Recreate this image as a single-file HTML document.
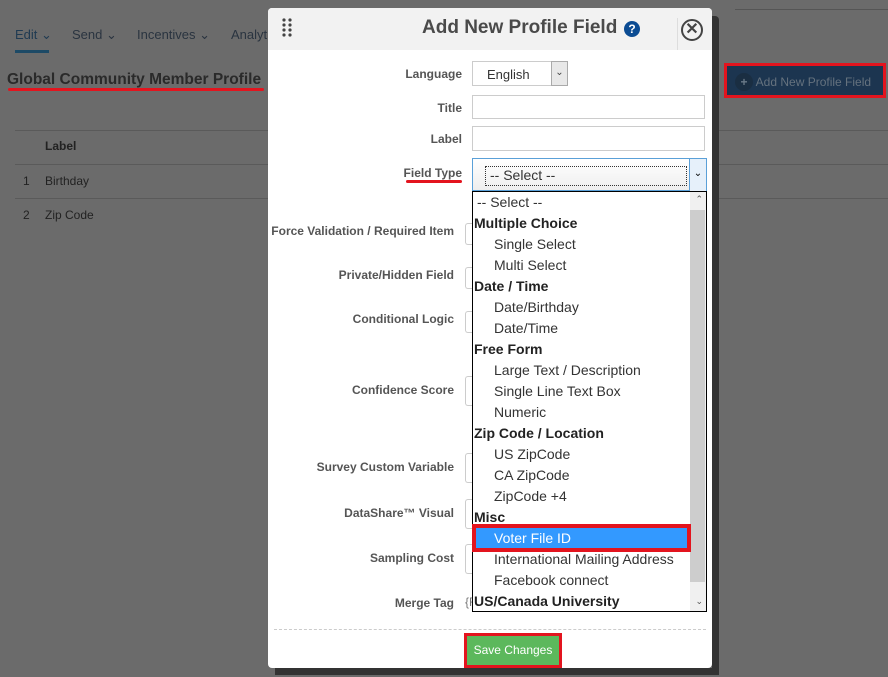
<!DOCTYPE html>
<html><head><meta charset="utf-8"><style>
*{box-sizing:border-box;margin:0;padding:0}
body{width:888px;height:677px;background:#6b6b6b;font-family:"Liberation Sans",sans-serif;position:relative;overflow:hidden}
.a{position:absolute}
.nav{font-size:13px;color:#2a3440;top:27px}
.lbl{position:absolute;right:434px;font-size:12px;font-weight:bold;color:#555;text-align:right;white-space:nowrap}
.lbl.t{right:426px}
.stub{position:absolute;left:465px;width:10px;border:1px solid #ccc;border-right:none;border-radius:3px 0 0 3px}
.it{height:21px;line-height:21px;font-size:14px;color:#333;white-space:nowrap}
.g{font-weight:bold;padding-left:1px;color:#222}
.o{padding-left:21px}
</style></head><body>
<div class="a nav" style="left:15px;color:#1f3a52">Edit ⌄</div>
<div class="a" style="left:15px;top:50px;width:34px;height:3px;background:#1d4a66"></div>
<div class="a nav" style="left:72px">Send ⌄</div>
<div class="a nav" style="left:137px">Incentives ⌄</div>
<div class="a nav" style="left:231px">Analyt</div>
<div class="a" style="left:735px;top:9px;width:153px;height:1px;background:#555"></div>
<div class="a" style="left:7px;top:71px;font-size:15.5px;font-weight:bold;color:#2a2a2a">Global Community Member Profile</div>
<div class="a" style="left:8px;top:88px;width:256px;height:3px;background:#e3141e;border-radius:2px"></div>
<div class="a" style="left:15px;top:130px;width:873px;height:1px;background:#5a5a5a"></div>
<div class="a" style="left:15px;top:164px;width:873px;height:1px;background:#5a5a5a"></div>
<div class="a" style="left:15px;top:198px;width:873px;height:1px;background:#5a5a5a"></div>
<div class="a" style="left:45px;top:139px;font-size:12px;font-weight:bold;color:#222">Label</div>
<div class="a" style="left:23px;top:174px;font-size:12px;color:#222">1</div>
<div class="a" style="left:45px;top:174px;font-size:12px;color:#222">Birthday</div>
<div class="a" style="left:23px;top:208px;font-size:12px;color:#222">2</div>
<div class="a" style="left:45px;top:208px;font-size:12px;color:#222">Zip Code</div>
<div class="a" style="left:724px;top:63px;width:162px;height:35px;border:3px solid #e3141e;background:#1c3550;color:#65727e;font-size:12px;padding:7px 0 0 8px;white-space:nowrap"><span style="display:inline-block;width:18px;height:18px;border-radius:9px;background:#1a2e42;color:#6a7a88;text-align:center;line-height:18px;font-weight:bold">+</span> Add New Profile Field</div>
<div class="a" style="left:712px;top:16px;width:7px;height:658px;background:#333;border-radius:0 4px 4px 0"></div>
<div class="a" style="left:275px;top:668px;width:444px;height:7px;background:#333"></div>
<div class="a" style="left:268px;top:8px;width:444px;height:660px;background:#fff;border-radius:4px">
 <div class="a" style="left:0;top:0;width:444px;height:42px;background:#f2f2f2;border-radius:4px 4px 0 0"></div>
 <div class="a" style="left:14px;top:10px;width:10px;font-size:0">
  <svg width="10" height="20"><g fill="#444"><circle cx="2" cy="2" r="1.6"/><circle cx="8" cy="2" r="1.6"/><circle cx="2" cy="7" r="1.6"/><circle cx="8" cy="7" r="1.6"/><circle cx="2" cy="12" r="1.6"/><circle cx="8" cy="12" r="1.6"/><circle cx="2" cy="17" r="1.6"/><circle cx="8" cy="17" r="1.6"/></g></svg></div>
 <div class="a" style="left:154px;top:9px;font-size:19px;font-weight:bold;color:#4a4a4a">Add New Profile Field</div>
 <div class="a" style="left:356px;top:13px;width:16px;height:16px;border-radius:8px;background:#0c4c93;color:#fff;font-size:12px;font-weight:bold;text-align:center;line-height:16px">?</div>
 <div class="a" style="left:409px;top:10px;width:0;height:32px;border-left:1px solid #ddd"></div>
 <div class="a" style="left:413px;top:11px;width:22px;height:22px;border:2.5px solid #444;border-radius:11px;text-align:center;line-height:17px;font-size:16px;font-weight:bold;color:#444">✕</div>
</div>
<div class="lbl t" style="top:67px">Language</div>
<div class="a" style="left:472px;top:61px;width:96px;height:25px;border:1px solid #ccc;font-size:13px;color:#333;padding:5px 0 0 14px">English</div>
<div class="a" style="left:551px;top:61px;width:17px;height:25px;border:1px solid #aaa;background:#e8e8e8;font-size:10px;text-align:center;line-height:22px;color:#444">⌄</div>
<div class="lbl t" style="top:101px">Title</div>
<div class="a" style="left:472px;top:95px;width:233px;height:24px;border:1px solid #ccc"></div>
<div class="lbl t" style="top:132px">Label</div>
<div class="a" style="left:472px;top:126px;width:233px;height:25px;border:1px solid #ccc"></div>
<div class="lbl t" style="top:166px">Field Type</div>
<div class="a" style="left:406px;top:180px;width:56px;height:3px;background:#e3141e;border-radius:2px"></div>
<div class="a" style="left:472px;top:158px;width:235px;height:33px;border:1px solid #5aa0d8;background:linear-gradient(#fff,#eee)"></div>
<div class="a" style="left:485px;top:166px;width:202px;height:20px;border:1px dotted #333;font-size:14px;color:#333;padding-left:4px;line-height:17px">-- Select --</div>
<div class="a" style="left:689px;top:159px;width:17px;height:32px;border-left:1px solid #5aa0d8;background:#e6f0fa;font-size:10px;text-align:center;line-height:30px">⌄</div>
<div class="lbl" style="top:224px">Force Validation / Required Item</div>
<div class="stub" style="top:223px;height:22px"></div>
<div class="lbl" style="top:268px">Private/Hidden Field</div>
<div class="stub" style="top:267px;height:22px"></div>
<div class="lbl" style="top:312px">Conditional Logic</div>
<div class="stub" style="top:311px;height:22px"></div>
<div class="lbl" style="top:383px">Confidence Score</div>
<div class="stub" style="top:376px;height:30px"></div>
<div class="lbl" style="top:460px">Survey Custom Variable</div>
<div class="stub" style="top:453px;height:30px"></div>
<div class="lbl" style="top:506px">DataShare™ Visual</div>
<div class="stub" style="top:499px;height:30px"></div>
<div class="lbl" style="top:551px">Sampling Cost</div>
<div class="stub" style="top:544px;height:30px"></div>
<div class="lbl" style="top:596px">Merge Tag</div>
<div class="a" style="left:465px;top:595px;font-size:12px;color:#777">{F</div>
<div class="a" style="left:274px;top:629px;width:432px;border-top:1px dashed #ccc"></div>
<div class="a" style="left:464px;top:633px;width:98px;height:35px;border:3px solid #e3141e;background:#5cb85c;color:#fff;font-size:12px;text-align:center;line-height:29px">Save Changes</div>
<div class="a" style="left:472px;top:191px;width:235px;height:421px;border:1px solid #000;background:#fff;overflow:hidden">
 <div class="a" style="right:0;top:0;width:16px;height:421px;background:#f0f0f0"></div>
 <div class="a" style="right:1px;top:18px;width:15px;height:372px;background:#cdcdcd"></div>
 <div class="a" style="right:3px;top:2px;font-size:9px;color:#555">⌃</div>
 <div class="a" style="right:3px;top:404px;font-size:9px;color:#555">⌄</div>
 <div style="position:relative;width:218px">
  <div class="it" style="padding-left:4px">-- Select --</div>
  <div class="it g">Multiple Choice</div>
  <div class="it o">Single Select</div>
  <div class="it o">Multi Select</div>
  <div class="it g">Date / Time</div>
  <div class="it o">Date/Birthday</div>
  <div class="it o">Date/Time</div>
  <div class="it g">Free Form</div>
  <div class="it o">Large Text / Description</div>
  <div class="it o">Single Line Text Box</div>
  <div class="it o">Numeric</div>
  <div class="it g">Zip Code / Location</div>
  <div class="it o">US ZipCode</div>
  <div class="it o">CA ZipCode</div>
  <div class="it o">ZipCode +4</div>
  <div class="it g">Misc</div>
  <div class="it o" style="background:#3399ff;color:#fff">Voter File ID</div>
  <div class="it o">International Mailing Address</div>
  <div class="it o">Facebook connect</div>
  <div class="it g">US/Canada University</div>
 </div>
</div>
<div class="a" style="left:472px;top:524px;width:219px;height:28px;border:4px solid #e3141e"></div>
</body></html>
